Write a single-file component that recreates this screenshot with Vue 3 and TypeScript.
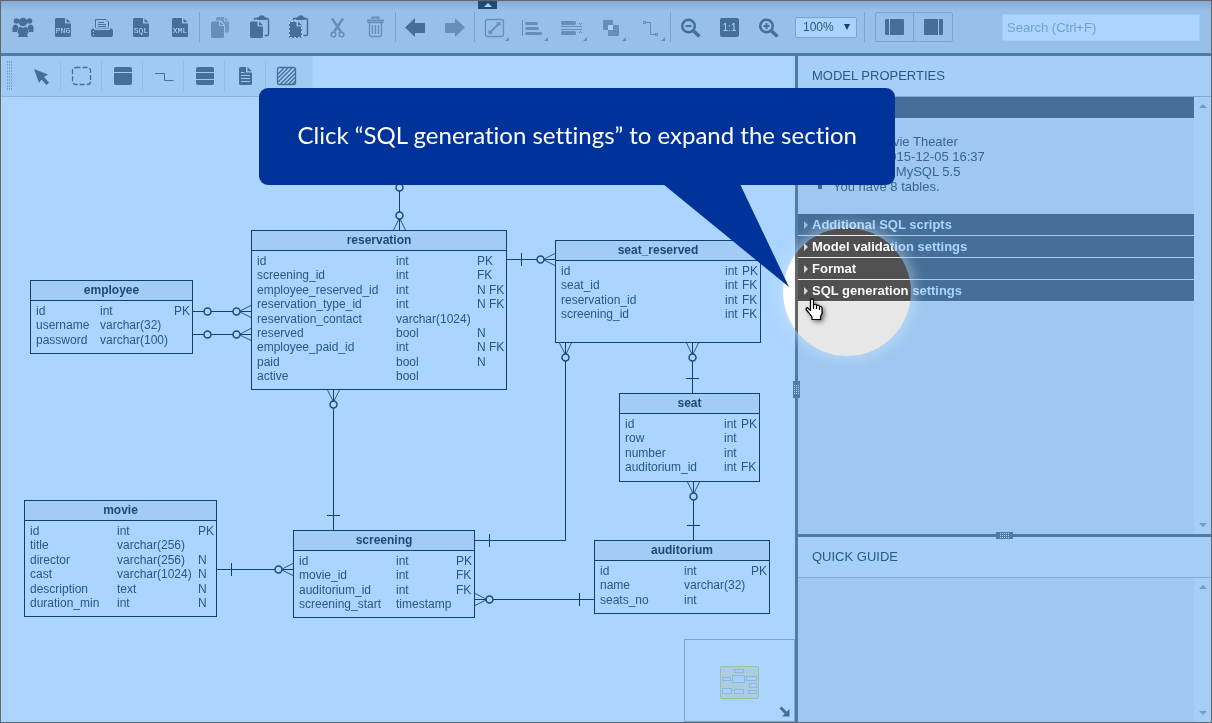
<script setup lang="ts">
import { ref } from 'vue'

interface Column { name: string; type: string; key?: string }
interface Entity {
  name: string
  x: number
  y: number
  w: number
  h: number
  /** widths of the name and type columns */
  cols: [number, number]
  columns: Column[]
}
interface Link {
  path: string
  feet?: string
  circles: [number, number][]
}

const ORIGIN = { x: 1, y: 56 }

const entities: Entity[] = [
  {
    name: 'employee', x: 30, y: 280, w: 163, h: 74, cols: [69, 74],
    columns: [
      { name: 'id', type: 'int', key: 'PK' },
      { name: 'username', type: 'varchar(32)' },
      { name: 'password', type: 'varchar(100)' },
    ],
  },
  {
    name: 'reservation', x: 251, y: 230, w: 256, h: 160, cols: [144, 81],
    columns: [
      { name: 'id', type: 'int', key: 'PK' },
      { name: 'screening_id', type: 'int', key: 'FK' },
      { name: 'employee_reserved_id', type: 'int', key: 'N FK' },
      { name: 'reservation_type_id', type: 'int', key: 'N FK' },
      { name: 'reservation_contact', type: 'varchar(1024)' },
      { name: 'reserved', type: 'bool', key: 'N' },
      { name: 'employee_paid_id', type: 'int', key: 'N FK' },
      { name: 'paid', type: 'bool', key: 'N' },
      { name: 'active', type: 'bool' },
    ],
  },
  {
    name: 'seat_reserved', x: 555, y: 240, w: 206, h: 103, cols: [169, 17],
    columns: [
      { name: 'id', type: 'int', key: 'PK' },
      { name: 'seat_id', type: 'int', key: 'FK' },
      { name: 'reservation_id', type: 'int', key: 'FK' },
      { name: 'screening_id', type: 'int', key: 'FK' },
    ],
  },
  {
    name: 'seat', x: 619, y: 393, w: 141, h: 89, cols: [104, 17],
    columns: [
      { name: 'id', type: 'int', key: 'PK' },
      { name: 'row', type: 'int' },
      { name: 'number', type: 'int' },
      { name: 'auditorium_id', type: 'int', key: 'FK' },
    ],
  },
  {
    name: 'movie', x: 24, y: 500, w: 193, h: 117, cols: [92, 81],
    columns: [
      { name: 'id', type: 'int', key: 'PK' },
      { name: 'title', type: 'varchar(256)' },
      { name: 'director', type: 'varchar(256)', key: 'N' },
      { name: 'cast', type: 'varchar(1024)', key: 'N' },
      { name: 'description', type: 'text', key: 'N' },
      { name: 'duration_min', type: 'int', key: 'N' },
    ],
  },
  {
    name: 'screening', x: 293, y: 530, w: 182, h: 88, cols: [102, 60],
    columns: [
      { name: 'id', type: 'int', key: 'PK' },
      { name: 'movie_id', type: 'int', key: 'FK' },
      { name: 'auditorium_id', type: 'int', key: 'FK' },
      { name: 'screening_start', type: 'timestamp' },
    ],
  },
  {
    name: 'auditorium', x: 594, y: 540, w: 176, h: 74, cols: [89, 67],
    columns: [
      { name: 'id', type: 'int', key: 'PK' },
      { name: 'name', type: 'varchar(32)' },
      { name: 'seats_no', type: 'int' },
    ],
  },
]

const links: Link[] = [
  { path: 'M193 311.5H251', feet: 'M251 305.5L239 311.5L251 317.5', circles: [[207.5, 311.5], [236.5, 311.5]] },
  { path: 'M193 334.5H251', feet: 'M251 328.5L239 334.5L251 340.5', circles: [[207.5, 334.5], [236.5, 334.5]] },
  { path: 'M399.5 160V230', feet: 'M393.5 230L399.5 218L405.5 230', circles: [[399.5, 187.5], [399.5, 215.5]] },
  { path: 'M507 259.5H555M521.5 253V266', feet: 'M555 253.5L543 259.5L555 265.5', circles: [[540.5, 259.5]] },
  { path: 'M333.5 390V530M327 515.5H340', feet: 'M327.5 390L333.5 402L339.5 390', circles: [[333.5, 404.5]] },
  { path: 'M565.5 343V540.5H475M489.5 534V547', feet: 'M559.5 343L565.5 355L571.5 343', circles: [[565.5, 357.5]] },
  { path: 'M692.5 343V393M686 378.5H699', feet: 'M686.5 343L692.5 355L698.5 343', circles: [[692.5, 357.5]] },
  { path: 'M693.5 482V540M687 525.5H700', feet: 'M687.5 482L693.5 494L699.5 482', circles: [[693.5, 496.5]] },
  { path: 'M217 569.5H293M231.5 563V576', feet: 'M293 563.5L281 569.5L293 575.5', circles: [[278.5, 569.5]] },
  { path: 'M475 599.5H594M579.5 593V606', feet: 'M475 593.5L487 599.5L475 605.5', circles: [[489.5, 599.5]] },
]

interface Tool { id: string; label: string; dim?: boolean; menu?: boolean; tag?: string }
const toolGroups: Tool[][] = [
  [
    { id: 'people', label: 'Share' },
    { id: 'file', label: 'Export PNG', tag: 'PNG' },
    { id: 'print', label: 'Print' },
    { id: 'file', label: 'Generate SQL', tag: 'SQL' },
    { id: 'file', label: 'Export XML', tag: 'XML' },
  ],
  [
    { id: 'copy', label: 'Copy', dim: true },
    { id: 'paste', label: 'Paste' },
    { id: 'paste-special', label: 'Paste special' },
    { id: 'cut', label: 'Cut', dim: true },
    { id: 'trash', label: 'Delete', dim: true },
  ],
  [
    { id: 'undo', label: 'Undo' },
    { id: 'redo', label: 'Redo', dim: true },
  ],
  [
    { id: 'edit', label: 'Line style', dim: true, menu: true },
    { id: 'align', label: 'Align', dim: true, menu: true },
    { id: 'distribute', label: 'Resize', dim: true, menu: true },
    { id: 'group', label: 'Order', dim: true, menu: true },
    { id: 'route', label: 'Route', dim: true, menu: true },
  ],
  [
    { id: 'zoom-out', label: 'Zoom out' },
    { id: 'one', label: 'Actual size' },
    { id: 'zoom-in', label: 'Zoom in' },
  ],
]
const palette = ['Pointer', 'Select area', 'Add table', 'Add reference', 'Add view', 'Add note', 'Add area']
const sections = ['Additional SQL scripts', 'Model validation settings', 'Format', 'SQL generation settings']
const zoom = ref('100%')
const query = ref('')
</script>

<template>
  <div class="app">
    <header class="toolbar">
      <template v-for="(group, g) in toolGroups" :key="g">
        <button v-for="t in group" :key="t.label" type="button" class="tool" :class="{ dim: t.dim }" :aria-label="t.label">
          <svg width="25" height="24" viewBox="0 0 25 24" aria-hidden="true">
            <g v-if="t.id === 'people'" class="f">
              <circle cx="5.5" cy="6" r="2.8" /><circle cx="18.5" cy="6" r="2.8" />
              <path d="M1.500 17V13Q1.500 9.500 5 9.500L7.500 11.500L6 17ZM22.500 17V13Q22.500 9.500 19 9.500L16.500 11.500L18 17Z" />
              <circle cx="12" cy="7" r="4.300" />
              <path d="M7 22L8 19L6.500 18Q6.500 12 9.500 11.800L12 13L14.500 11.800Q17.500 12 17.500 18L16 19L17 22Z" />
            </g>
            <g v-else-if="t.id === 'file'">
              <path class="f" d="M6.500 3H15V8.500H21V20.500Q21 22 19.500 22H6.500Q5 22 5 20.500V4.500Q5 3 6.500 3Z" />
              <path class="f" d="M16.500 3.500L20.500 7.300H16.500Z" />
              <text class="tag" x="13" y="18" text-anchor="middle">{{ t.tag }}</text>
            </g>
            <g v-else-if="t.id === 'print'">
              <path class="f" d="M4 13.500H21.500Q24 13.500 24 16V20Q24 22 22 22H4Q2 22 2 20V16Q2 13.500 4 13.500Z" />
              <path class="s" d="M6.500 12.500V4.500H17L19.500 7V12.500M9 7.500H15M9 9.500H17M9 11.500H17" />
              <path class="cutline" d="M4 16.500H5M4 19.500H5M5.500 12V14.500H20.500V12" />
            </g>
            <g v-else-if="t.id === 'copy'">
              <path class="f" opacity=".8" d="M10.500 2H17V6.500H22V16Q22 17.500 20.500 17.500H18V10L14 5.500H9V3.500Q9 2 10.500 2ZM18 2.500L21.500 5.500H18Z" />
              <path class="f" d="M5.500 6.500H12V11H17V21.500Q17 23 15.500 23H5.500Q4 23 4 21.500V8Q4 6.500 5.500 6.500ZM13 7L16.500 10H13Z" />
            </g>
            <g v-else-if="t.id === 'paste' || t.id === 'paste-special'">
              <path class="s" stroke-width="1.5" d="M8.500 5V4Q8.500 3.500 9.500 3.500H21Q22.500 3.500 22.500 5V19Q22.500 20.500 21 20.500H18.500" />
              <path class="f" d="M11 5V3.500Q11 2.500 12.500 2.300L14 0.500H17.500L19 2.300Q20.500 2.500 20.500 3.500V5Z" />
              <path class="halo" d="M5.500 6H13L17 10V21.500Q17 23 15.500 23H5.500Q4 23 4 21.500V7.500Q4 6 5.500 6Z" />
              <path class="f" d="M5.500 6.500H11.500V11.500H17V21.500Q17 23 15.500 23H5.500Q4 23 4 21.500V8Q4 6.500 5.500 6.500ZM13 6.500L17 10.300H13Z" />
              <path v-if="t.id === 'paste-special'" class="dash" d="M12 6.500H4.500V22.500H16.500V11" />
            </g>
            <g v-else-if="t.id === 'cut'">
              <path class="s" stroke-width="2.500" d="M8 3.500L17 17M19 3.500L10 17" />
              <circle class="s" stroke-width="1.500" cx="9.500" cy="19.500" r="2.300" />
              <circle class="s" stroke-width="1.500" cx="17.500" cy="19.500" r="2.300" />
            </g>
            <g v-else-if="t.id === 'trash'" class="s">
              <path d="M9.500 4V2.500H15.500V4M4 5.500H21" stroke-width="2" />
              <path d="M4.500 7.500H20.500M6.500 8V20Q6.500 21.500 8 21.500H17Q18.500 21.500 18.500 20V8M9.500 10V19M12.500 10V19M15.500 10V19" stroke-width="1.300" />
            </g>
            <path v-else-if="t.id === 'undo'" class="f" d="M2 12.500L12 3V8H21Q22 8 22 9V17Q22 18 21 18H12V22Z" />
            <path v-else-if="t.id === 'redo'" class="f" d="M23 12.500L13 3V8H4Q3 8 3 9V17Q3 18 4 18H13V22Z" />
            <g v-else-if="t.id === 'edit'">
              <rect class="s" x="3.500" y="4.500" width="18" height="17" rx="2" stroke-width="1.300" />
              <path class="s" stroke-width="1.800" d="M8 17.500L17 8.500" />
              <path class="f" d="M6.500 19V14.500L11 19ZM18.500 7V11.500L14 7Z" />
            </g>
            <g v-else-if="t.id === 'align'">
              <path class="s" d="M1.500 5V21" />
              <rect class="f" x="4" y="7" width="13" height="3" rx="1.500" />
              <rect class="f" x="4" y="12" width="14" height="3" rx="1.500" />
              <rect class="f" x="4" y="17" width="17" height="3" rx="1.500" />
            </g>
            <g v-else-if="t.id === 'distribute'">
              <rect class="f" x="1" y="6" width="15" height="4" rx="1.500" />
              <rect class="f" x="1" y="16" width="15" height="4" rx="1.500" />
              <path class="s" d="M1 11.500H22M1 14.500H22" />
              <path class="s" d="M19 8.500H20M21 8.500H22M20 9.500H21M20 16.500H21M19 17.500H20M21 17.500H22" />
            </g>
            <g v-else-if="t.id === 'group'">
              <rect class="f" x="4" y="5" width="10" height="10" rx="1" />
              <rect class="f" x="9" y="10" width="11" height="11" rx="1" />
              <rect class="light" x="9" y="10" width="5" height="5" />
            </g>
            <g v-else-if="t.id === 'route'" class="s">
              <rect x="5.500" y="6.500" width="2" height="2" /><rect x="17.500" y="18.500" width="2" height="2" />
              <path d="M8 7.500H12.500V19.500H17" />
            </g>
            <g v-else-if="t.id === 'one'">
              <rect class="f" x="3" y="3" width="19" height="19" rx="2" />
              <text class="one" x="12.500" y="16" text-anchor="middle">1:1</text>
            </g>
            <g v-else>
              <circle class="s" stroke-width="2.500" cx="10.500" cy="11" r="6.300" />
              <path class="s" stroke-width="3.500" d="M15.500 16L21.500 21.500" />
              <path class="s" stroke-width="2" :d="t.id === 'zoom-in' ? 'M7.500 11H13.500M10.500 8V14' : 'M7.500 11H13.500'" />
            </g>
            <path v-if="t.menu" class="f" d="M27 22V26H23Z" />
          </svg>
        </button>
        <i v-if="g < toolGroups.length - 1" class="sep"></i>
      </template>
      <div class="zoom">
        <select v-model="zoom" aria-label="Zoom level"><option>100%</option></select>
        <svg width="8" height="8" viewBox="0 0 8 8" aria-hidden="true"><path d="M1 1H7L4 7Z" /></svg>
      </div>
      <i class="sep"></i>
      <div class="panels">
        <button type="button" aria-label="Toggle left panel">
          <svg width="19" height="16" viewBox="0 0 19 16"><path class="f" d="M1 0H4V16H1Q0 16 0 15V1Q0 0 1 0ZM5 0H18Q19 0 19 1V15Q19 16 18 16H5Z" /></svg>
        </button>
        <button type="button" aria-label="Toggle right panel">
          <svg width="19" height="16" viewBox="0 0 19 16"><path class="f" d="M18 0H15V16H18Q19 16 19 15V1Q19 0 18 0ZM14 0H1Q0 0 0 1V15Q0 16 1 16H14Z" /></svg>
        </button>
      </div>
      <input v-model="query" class="search" type="text" aria-label="Search" placeholder="Search (Ctrl+F)" />
      <button type="button" class="collapse" aria-label="Collapse toolbar">
        <svg width="8" height="4" viewBox="0 0 8 4"><path d="M4 0L8 4H0Z" /></svg>
      </button>
    </header>

    <div class="body">
      <main class="canvas">
        <svg class="links" width="794" height="666" viewBox="1 56 794 666" aria-hidden="true">
          <g v-for="(l, i) in links" :key="i">
            <path class="line" :d="l.path" />
            <path class="feet" :d="l.feet" />
            <circle v-for="(c, j) in l.circles" :key="j" :cx="c[0]" :cy="c[1]" r="3.500" />
          </g>
        </svg>
        <section
          v-for="e in entities" :key="e.name" class="entity"
          :style="{ left: e.x - ORIGIN.x + 'px', top: e.y - ORIGIN.y + 'px', width: e.w + 'px', height: e.h + 'px' }"
        >
          <h2>{{ e.name }}</h2>
          <table :aria-label="e.name">
            <colgroup>
              <col :style="{ width: e.cols[0] + 'px' }" /><col :style="{ width: e.cols[1] + 'px' }" /><col />
            </colgroup>
            <tbody>
              <tr v-for="c in e.columns" :key="c.name">
                <td>{{ c.name }}</td><td>{{ c.type }}</td><td>{{ c.key }}</td>
              </tr>
            </tbody>
          </table>
        </section>

        <nav class="palette" aria-label="Diagram tools">
          <i class="grip"></i>
          <button v-for="(p, i) in palette" :key="p" type="button" :aria-label="p">
            <svg width="24" height="24" viewBox="0 0 24 24" aria-hidden="true">
              <path v-if="i === 0" class="f" d="M6 5L20 10.500L16 13L21 18.500L18.500 21L13.500 15.500L11 19Z" />
              <rect v-else-if="i === 1" class="s" x="3.500" y="3.500" width="18" height="17" rx="3" stroke-width="1.300" stroke-dasharray="5 2" />
              <g v-else-if="i === 2" class="f">
                <path d="M6 3H20Q22 3 22 5V8H4V5Q4 3 6 3ZM4 9H22V19Q22 21 20 21H6Q4 21 4 19Z" />
              </g>
              <path v-else-if="i === 3" class="s" d="M4 9.500H13.500V16.500H22.500" />
              <g v-else-if="i === 4" class="f">
                <path d="M6 3H20Q22 3 22 5V8H4V5Q4 3 6 3ZM4 9H22V15H4ZM4 16H22V19Q22 21 20 21H6Q4 21 4 19Z" />
              </g>
              <g v-else-if="i === 5">
                <path class="f" d="M7.500 3H13V8.500H19V19.500Q19 21 17.500 21H7.500Q6 21 6 19.500V4.500Q6 3 7.500 3ZM14.500 3L19 7.300H14.500Z" />
                <path class="cutline" d="M8 8.500H11.500M8 11.500H17M8 14.500H17M8 17.500H17" />
              </g>
              <g v-else class="s" stroke-width="1.300">
                <rect x="3.500" y="3.500" width="18" height="17" rx="2" />
                <path d="M4 10L10 4M4 14L14 4M4 18L18 4M6.500 20L21 5.500M10.500 20L21 9.500M14.500 20L21 13.500M18 20.500L21.500 17" />
              </g>
            </svg>
          </button>
        </nav>

        <div class="minimap">
          <svg class="map" width="39" height="33" viewBox="0 0 39 33" aria-hidden="true">
            <rect class="view" x=".5" y=".5" width="38" height="32" rx="1" />
            <g class="mini">
              <rect x="14.500" y="3.500" width="9" height="3" /><rect x="2.500" y="11.500" width="8" height="3" />
              <rect x="12.500" y="9.500" width="12" height="7" /><rect x="26.500" y="10.500" width="10" height="4" />
              <rect x="29.500" y="17.500" width="7" height="4" /><rect x="2.500" y="22.500" width="9" height="5" />
              <rect x="14.500" y="23.500" width="9" height="4" /><rect x="28.500" y="24.500" width="8" height="3" />
            </g>
          </svg>
          <button type="button" aria-label="Hide minimap">
            <svg width="11" height="11" viewBox="0 0 11 11"><path class="s" stroke-width="3" d="M1.500 1.500L7 7" /><path class="f" d="M10.500 3V10.500H3Z" /></svg>
          </button>
        </div>
      </main>

      <div class="vsplit"><i></i></div>

      <aside class="side">
        <section class="props">
          <h1>MODEL PROPERTIES</h1>
          <div class="scroll">
            <div class="content">
              <h3><button type="button" class="bar">General</button></h3>
              <ul>
                <li>Name: Movie Theater</li>
                <li>Update: 2015-12-05 16:37</li>
                <li>Database: MySQL 5.5</li>
                <li>You have 8 tables.</li>
              </ul>
              <h3 v-for="s in sections" :key="s">
                <button type="button" class="bar" aria-expanded="false">{{ s }}</button>
              </h3>
            </div>
            <div class="track"><i class="up"></i><i class="down"></i></div>
          </div>
        </section>
        <div class="hsplit"><i></i></div>
        <section class="guide">
          <h1>QUICK GUIDE</h1>
          <div class="scroll">
            <div class="content"></div>
            <div class="track"><i class="up"></i><i class="down"></i></div>
          </div>
        </section>
      </aside>
    </div>

    <div class="spot"></div>
    <svg class="hand" width="18" height="23" viewBox="0 0 18 23" aria-hidden="true">
      <path d="M5.500 13V2.500Q5.500 .8 7 .8T8.500 2.500V7Q9.500 6 10.500 6.300T11.500 7.500Q12.500 6.800 13.500 7.300T14.500 8.500Q15.500 8 16.300 8.700T17 10V15.500L15.500 18.500V21.500H7V19L4 15L1 11.500Q1 9.500 2.500 9.700L5.500 12.500M8.500 7V11M11.500 7.500V11M14.500 8.500V12" />
    </svg>
    <div class="callout" role="tooltip">
      Click “SQL generation settings” to expand the section
      <svg width="126" height="103" viewBox="0 0 126 103" aria-hidden="true"><path d="M0 0H77L126 103Z" /></svg>
    </div>
  </div>
</template>

<style>
body { overflow: hidden; }
</style>

<style scoped>
* { box-sizing: border-box; }
.app {
  position: relative; display: flex; flex-direction: column; height: 100vh;
  border: 1px solid #666; background: #abd5ff; color: #34608c;
  font-family: "Liberation Sans", Arial, sans-serif; font-size: 13px;
}
button { border: 0; padding: 0; margin: 0; background: none; font: inherit; color: inherit; }
h1, h2, h3, ul { margin: 0; padding: 0; }
svg { display: block; overflow: visible; }
.f { fill: #456f99; }
.s { fill: none; stroke: #456f99; }
.cutline { fill: none; stroke: #9fc9f2; }
.halo { fill: #97c0e8; stroke: #97c0e8; stroke-width: 1; }
.dash { fill: none; stroke: #a9d3fc; stroke-dasharray: 2 2; }
.light { fill: #b4dcff; }

.toolbar {
  position: relative; display: flex; align-items: center; flex: none; height: 55px;
  padding: 0 11px 0 3px; border-bottom: 3px solid #507ba5;
  background: linear-gradient(#84abd7, #97c0e8 10px);
}
.tool { display: flex; align-items: center; justify-content: center; width: 39px; height: 52px; flex: none; }
.tool.dim { opacity: .6; }
.tag { font: 8px "Liberation Mono", monospace; fill: #b4dcff; }
.one { font: 10px "Liberation Sans", sans-serif; fill: #abd5ff; }
.sep { width: 1px; height: 30px; background: #7ba5cf; flex: none; }
.zoom { position: relative; margin: 0 7px; flex: none; }
.zoom select {
  display: block; appearance: none; width: 62px; height: 21px; padding: 0 7px; margin: 0;
  border: 1px solid #7ba5cf; border-radius: 2px; background: #a9d3fd; color: #2b5784;
  font: 12px "Liberation Sans", Arial, sans-serif;
}
.zoom svg { position: absolute; right: 6px; top: 6px; fill: #143f6b; pointer-events: none; }
.panels { display: flex; margin-left: 10px; border: 1px solid #7ba5cf; border-radius: 2px; flex: none; }
.panels button { display: flex; align-items: center; justify-content: center; width: 37px; height: 28px; }
.panels button + button { border-left: 1px solid #7ba5cf; width: 39px; }
.search {
  width: 198px; height: 27px; margin-left: auto; padding: 0 4px; border: 1px solid #a2ccf5; border-radius: 1px;
  background: #abd5ff; color: #34608c; font: 13px "Liberation Sans", Arial, sans-serif;
}
.search::placeholder { color: #77a1cb; opacity: 1; }
.collapse {
  position: absolute; top: 0; left: calc(40% - 7px); width: 19px; height: 8px;
  display: flex; align-items: center; justify-content: center; background: #1f4b78;
}
.collapse svg { fill: #abd5ff; }

.body { display: flex; flex: 1; min-height: 0; }
.canvas { position: relative; flex: 1; min-width: 0; overflow: hidden; background: #abd5ff; }
.links { position: absolute; top: 0; left: 0; }
.line { fill: none; stroke: #143f6b; }
.feet { fill: none; stroke: #2b5784; }
.links circle { fill: #abd5ff; stroke: #1f4b78; stroke-width: 1.500; }
.entity { position: absolute; border: 1px solid #143f6b; background: #abd5ff; color: #2b5784; font-size: 12px; }
.entity h2 {
  height: 20px; border-bottom: 1px solid #143f6b; background: #a2ccf5; color: #1d4976;
  font-size: 12px; line-height: 18px; text-align: center;
}
.entity table { width: 100%; table-layout: fixed; border-collapse: collapse; margin-top: 3px; line-height: 1.2; }
.entity td { padding: 0; white-space: nowrap; }
.entity td:first-child { padding-left: 5px; }

.palette {
  position: absolute; top: 0; left: 0; display: flex; height: 41px; padding-left: 6px;
  background: #9fcaf4; border-bottom: 1px solid #8bb5df; border-right: 1px solid #a6d0fa;
}
.palette .grip {
  width: 5px; height: 30px; margin: 5px 8px 0 0;
  background: conic-gradient(transparent 75%, #7ba5cf 0) 0 0 / 2px 3px;
}
.palette button { display: flex; align-items: center; justify-content: center; width: 41px; height: 30px; margin-top: 5px; border-right: 1px solid #93bde7; }
.palette button:last-child { border-right: 0; width: 46px; padding-right: 6px; }

.minimap {
  position: absolute; right: 0; bottom: 0; width: 111px; height: 83px; padding-top: 4px; border: 1px solid #7ba5cf;
  display: flex; align-items: center; justify-content: center;
}
.minimap button { position: absolute; right: 4px; bottom: 4px; }
.view { fill: #aacde0; stroke: #a0bda6; }
.mini { fill: #a6d0f8; stroke: #8db7dc; }

.vsplit, .hsplit { flex: none; display: flex; align-items: center; justify-content: center; background: #507ba5; }
.vsplit { width: 3px; }
.hsplit { height: 3px; }
.vsplit i, .hsplit i {
  flex: none; position: relative; z-index: 1; border: 0 solid #507ba5;
  background: conic-gradient(#507ba5 75%, #abd5ff 0) 0 0 / 2px 2px;
}
.vsplit i { width: 7px; height: 17px; border-width: 4px 1px; }
.hsplit i { width: 17px; height: 7px; border-width: 1px 4px; }

.side { display: flex; flex-direction: column; width: 413px; flex: none; background: #9ec8f0; }
.props { display: flex; flex-direction: column; height: 478px; min-height: 0; }
.guide { display: flex; flex-direction: column; flex: 1; min-height: 0; }
h1 {
  height: 41px; flex: none; padding-left: 14px; border-bottom: 1px solid #80aad5; background: #a5cff8;
  color: #2b5784; font-size: 13px; font-weight: 400; line-height: 39px;
}
.scroll { display: flex; flex: 1; min-height: 0; }
.content { flex: 1; }
h3 { border-bottom: 1px solid #a3cdf6; font-size: 13px; }
.bar {
  position: relative; display: block; width: 100%; height: 21px; padding: 0 14px; background: #456f96;
  color: #abd5ff; font-weight: 700; line-height: 21px; text-align: left;
}
.bar::before { content: ""; position: absolute; left: 6px; top: 7px; border: 4px solid transparent; border-left-color: #94bee8; border-right-width: 0; }
ul { list-style: square; padding: 15px 0 20px 35px; line-height: 15px; color: #3b658e; }
.track { display: flex; flex-direction: column; justify-content: space-between; align-items: center; width: 17px; padding: 7px 0; background: #a4cef6; }
.track i { border: 4px solid transparent; }
.track .up { border-top-width: 0; border-bottom-color: #729cc6; }
.track .down { border-bottom-width: 0; border-top-color: #729cc6; }

.spot {
  position: absolute; top: 227px; right: 300px; width: 128px; height: 128px; border-radius: 50%;
  backdrop-filter: grayscale(1) brightness(.96) contrast(1.76);
  box-shadow: 0 0 14px 3px rgba(215, 235, 255, .5);
}
.hand { position: absolute; top: 297px; right: 388px; filter: drop-shadow(2px 2px 2px rgba(0, 0, 0, .5)); }
.hand path { fill: #fff; stroke: #000; stroke-width: 1.200; }
.callout {
  position: absolute; top: 87px; right: 316px; height: 97px; padding: 0 38px 0 39px; border-radius: 9px;
  background: #039; color: #fff; font-family: Lato, sans-serif; font-size: 24px; line-height: 93px;
  font-variant-ligatures: none; white-space: nowrap;
}
.callout svg { position: absolute; top: 96px; right: 106px; fill: #039; }
</style>
